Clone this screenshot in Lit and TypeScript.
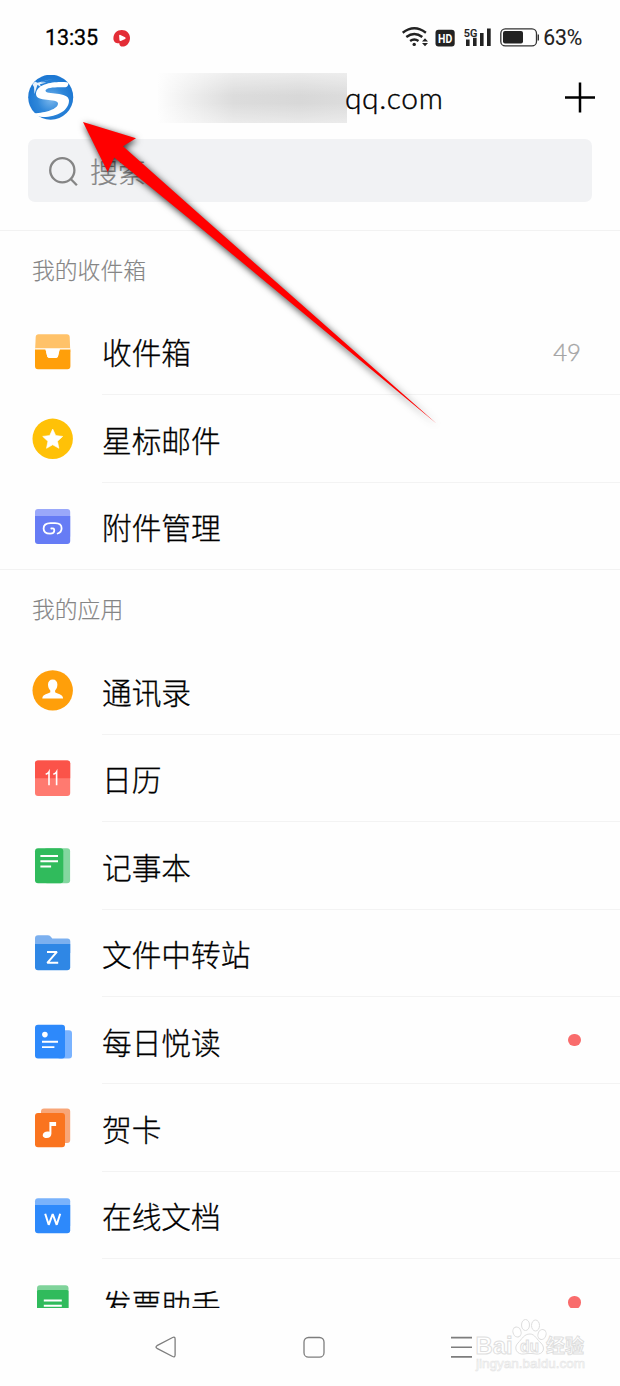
import { LitElement, html, svg, css, nothing } from "lit";
import { customElement, property } from "lit/decorators.js";

const icons: Record<string, unknown> = {
  inbox: svg`<path d="M6.500 3.300h28.400q2.600 0 2.800 2.600l.6 15H3l.7-15q.2-2.600 2.800-2.600z" fill="#ffc269"/>
    <path d="M3.200 17.300h35l.2 3H3z" fill="#fff"/>
    <path d="M3 18.600h10.500l1.700 6.600q.5 1.800 2.300 1.800h6.200q1.800 0 2.300-1.800l1.700-6.600h10.700v16.600q0 3-3 3H6q-3 0-3-3z" fill="#ff9f0a"/>
    <path d="M13.500 18h14.200l-1.700 7.200q-.5 1.800-2.300 1.800h-6.200q-1.800 0-2.300-1.800z" fill="#fff"/>`,
  star: svg`<circle cx="20.700" cy="19.800" r="20.200" fill="#ffc107"/>
    <path d="M20.700 10l3 6.500 7 .9-5.200 4.900 1.400 7-6.200-3.500-6.200 3.500 1.400-7L10.700 17.400l7-.9z" fill="#fff" stroke="#fff" stroke-width=".6" stroke-linejoin="round"/>`,
  attach: svg`<rect x="3" y="3" width="35.200" height="30" rx="3" fill="#9aa8fa"/>
    <path d="M3 10h35.200V35q0 3-3 3H6q-3 0-3-3z" fill="#667cf5"/>
    <path d="M19.300 22.500q3-.6 3 1.700c0 2.100-1.900 3.400-4.200 3.400-3.900 0-6.500-2-6.500-5.100 0-3.400 2.700-5.400 6.900-5.400h4.600c3.900 0 6.500 1.900 6.500 5.100 0 2.700-1.500 4.600-4 5.300" fill="none" stroke="#fff" stroke-width="1.800" stroke-linecap="round"/>`,
  contacts: svg`<circle cx="20.700" cy="19.400" r="20.200" fill="#ff9f0a"/>
    <path d="M20.700 8.600c3 0 4.700 2 4.700 5 0 2.500-.9 4.700-2.300 6v1.700c1.700 1.500 8 1.700 8 6.200H10.300c0-4.500 6.300-4.700 8-6.200v-1.700c-1.400-1.300-2.300-3.500-2.300-6 0-3 1.700-5 4.700-5z" fill="#fff"/>`,
  calendar: svg`<rect x="3" y="2.400" width="35.200" height="35.600" rx="3" fill="#ff7a70"/>
    <path d="M3 20.200V5.400q0-3 3-3h29.200q3 0 3 3v14.800z" fill="#fb5349"/>
    <path d="M13.700 16.200q2.300-.7 3.300-2.400V27.300M21.300 16.200q2.300-.7 3.300-2.400V27.300" fill="none" stroke="#fff" stroke-width="1.600"/>`,
  notes: svg`<rect x="12" y="2.200" width="26.100" height="35" rx="3" fill="#84d7a0"/>
    <rect x="3" y="2.200" width="28.300" height="35" rx="3" fill="#30bb5c"/>
    <path d="M8.400 10.100h17.600M8.400 15.200h17.600M8.400 20.500h10.700" stroke="#fff" stroke-width="2"/>`,
  folder: svg`<path d="M3 20V5.200q0-3 3-3h9.700q1.800 0 2.900 1.300l1.700 2h15q3 0 3 3V20z" fill="#7cb0ef"/>
    <path d="M3 11h35.200v23.300q0 3-3 3H6q-3 0-3-3z" fill="#2f87e5"/>
    <path d="M15 18.900h9.900L15.300 29.800h10.900" fill="none" stroke="#fff" stroke-width="2" stroke-linejoin="bevel"/>`,
  reading: svg`<rect x="25" y="9.200" width="15" height="28.200" rx="3" fill="#7ab3ff"/>
    <rect x="3" y="3.700" width="30" height="33.700" rx="3" fill="#2d89fb"/>
    <circle cx="12.900" cy="13.600" r="2.800" fill="#fff"/>
    <path d="M10 20.700h16M10 26.100h12.400" stroke="#fff" stroke-width="1.900"/>`,
  card: svg`<rect x="9" y=".4" width="29.200" height="34.500" rx="3" fill="#f8a678"/>
    <rect x="3" y="4.900" width="30" height="34.300" rx="3" fill="#fa741f"/>
    <path d="M17.400 14h6.700v4h-4.700v7.800c0 2.700-2.100 4.300-4.700 4.300-2.300 0-4-1.100-4-2.900 0-2.400 3.300-4.400 6.700-3.400z" fill="#fff"/>`,
  docs: svg`<rect x="3" y="3.200" width="35.200" height="30" rx="3" fill="#79b2fb"/>
    <path d="M3 9.900h35.200V35.200q0 3-3 3H6q-3 0-3-3z" fill="#2d89fb"/>
    <path d="M13.200 18.700l3.500 11.100 4-10.800 4 10.800 3.500-11.100" fill="none" stroke="#fff" stroke-width="2" stroke-linejoin="bevel"/>`,
  invoice: svg`<rect x="5" y="2.200" width="31.500" height="30" rx="3" fill="#7fd39a"/>
    <path d="M5 8.600q0-1.500 1.500-1.500h28.500q1.500 0 1.500 1.500v31H5z" fill="#30bb5c"/>
    <path d="M11.800 17.500h18M11.800 22.700h18" stroke="#fff" stroke-width="1.900"/>`,
};

interface Item { icon: string; label: string; count?: number; dot?: boolean; }

const sections: { title: string; items: Item[] }[] = [
  {
    title: "我的收件箱",
    items: [
      { icon: "inbox", label: "收件箱", count: 49 },
      { icon: "star", label: "星标邮件" },
      { icon: "attach", label: "附件管理" },
    ],
  },
  {
    title: "我的应用",
    items: [
      { icon: "contacts", label: "通讯录" },
      { icon: "calendar", label: "日历" },
      { icon: "notes", label: "记事本" },
      { icon: "folder", label: "文件中转站" },
      { icon: "reading", label: "每日悦读", dot: true },
      { icon: "card", label: "贺卡" },
      { icon: "docs", label: "在线文档" },
      { icon: "invoice", label: "发票助手", dot: true },
    ],
  },
];

@customElement("mail-row")
class MailRow extends LitElement {
  @property({ attribute: false }) item!: Item;

  static styles = css`
    :host { display: flex; height: 87.4px; box-sizing: border-box; padding-left: 32px; align-items: center; }
    .icon { width: 40px; height: 40px; overflow: visible; flex: none; }
    .body { flex: 1; margin-left: 30px; height: 100%; box-sizing: border-box; border-bottom: 1px solid #f3f3f3; display: flex; align-items: center; justify-content: space-between; padding-right: 39px; }
    :host([last]) .body { border-bottom-color: transparent; }
    .label { font-size: 29.700px; line-height: 44px; font-weight: 300; -webkit-text-stroke: 0.3px #000; color: #000; padding-top: 3px; }
    .count { font: 300 24px/30px "Lato", sans-serif; color: #a4a4a4; -webkit-text-stroke: 0.35px #a4a4a4; padding-top: 2px; }
    .dot { width: 12.500px; height: 12.500px; border-radius: 50%; background: #f96c6c; margin-right: 0.5px; }
  `;

  render() {
    const { icon, label, count, dot } = this.item;
    return html`
      <svg class="icon" viewBox="0 0 40 40">${icons[icon]}</svg>
      <div class="body">
        <span class="label">${label}</span>
        ${count ? html`<span class="count">${count}</span>` : nothing}
        ${dot ? html`<span class="dot"></span>` : nothing}
      </div>`;
  }
}

@customElement("status-bar")
class StatusBar extends LitElement {
  static styles = css`
    :host { display: flex; height: 73px; box-sizing: border-box; padding: 24px 38px 0 45px; justify-content: space-between; align-items: flex-start; font: 21.500px/28px Roboto, sans-serif; color: #222; }
    .left { display: flex; align-items: center; gap: 15px; }
    .time { letter-spacing: -0.1px; color: #000; -webkit-text-stroke: 0.3px #000; }
    .right { display: flex; align-items: center; }
    .signals { width: 138px; height: 28px; margin-right: 4px; }
    .level { font-size: 21.200px; letter-spacing: -0.2px; -webkit-text-stroke: 0.1px #222; }
    .tag { font: 700 13px "Roboto", sans-serif; }
    .net { font: 500 11.500px "Roboto", sans-serif; }
  `;

  render() {
    return html`
      <div class="left">
        <span class="time">13:35</span>
        <svg width="18" height="18" viewBox="0 0 18 18">
          <path d="M.4 9.400C.4 4.500 4 1 8.800 1c4.700 0 8.200 3.400 8.200 8 0 4.900-3.500 8.600-7.400 8.600-2 0-3.300-1.300-3.300-3.400-2.700.5-5.900-1.200-5.900-4.800z" fill="#e32d36"/>
          <path d="M7 6.700l.4 4.500 4.300-2.100z" fill="#fff" stroke="#fff" stroke-width="1.800" stroke-linejoin="round"/>
        </svg>
      </div>
      <div class="right">
        <svg class="signals" viewBox="401 24 138 28">
          <g fill="none" stroke="#222" stroke-width="2.400">
            <path d="M402.700 32.700q11.600-9 23.200 0"/><path d="M406.300 37q8-6 16 0"/><path d="M410.100 41q4.200-3 8.400 0"/>
          </g>
          <circle cx="414.200" cy="44.400" r="1.700" fill="#222"/>
          <path d="M422 41.500l3-3.200 3 3.200zM422 43h6l-3 3.200z" fill="#222"/>
          <rect x="435.500" y="29.800" width="19.200" height="16.700" rx="3" fill="#222"/>
          <text class="tag" x="438" y="42.900" textLength="14.200" lengthAdjust="spacingAndGlyphs" fill="#fff">HD</text>
          <text class="net" x="463.800" y="36.500" textLength="13.500" lengthAdjust="spacingAndGlyphs" fill="#222" stroke="#222" stroke-width=".2">5G</text>
          <path d="M466 39.500h3.600v6.500H466zM473 37.800h3.600V46H473zM480 33h3.600v13H480zM487 28.500h3.700V46H487z" fill="#222"/>
          <rect x="500.800" y="28.900" width="35.700" height="17" rx="4.500" fill="none" stroke="#333" stroke-width="1.300"/>
          <rect x="503" y="31" width="20" height="12.600" rx="2" fill="#222"/>
          <path d="M538.300 34.500v6" stroke="#333" stroke-width="1.400"/>
        </svg>
        <span class="level">63%</span>
      </div>`;
  }
}

@customElement("app-root")
class AppRoot extends LitElement {
  static styles = css`
    :host { display: flex; flex-direction: column; position: relative; width: 620px; height: 1386px; overflow: hidden; background: #fefefe; font-family: "Noto Sans CJK SC", sans-serif; }
    .header { display: flex; align-items: center; height: 50px; padding: 0 24px 0 28px; }
    .logo { width: 46px; height: 46px; }
    .mask { width: 189px; height: 50px; margin-left: 84px; background: linear-gradient(180deg, #ffffff80 0%, #ffffff00 45%, #ffffff00 60%, #ffffff70 100%), linear-gradient(90deg, #fdfdfd 0%, #f0f0f0 15%, #dcdcdc 40%, #d8d8d8 75%, #dcdcdc 100%); }
    .address { flex: 1; margin-left: -2px; font: 300 30px/34px "Lato", sans-serif; letter-spacing: 0.6px; -webkit-text-stroke: 0.4px #000; color: #000; position: relative; top: -1px; }
    .plus { width: 32px; height: 32px; }
    .search { display: flex; align-items: center; height: 63px; margin: 16px 28px 28px; border-radius: 7px; background: #f1f2f4; padding-left: 20px; color: #858585; font-size: 28px; font-weight: 300; -webkit-text-stroke: 0.2px #858585; line-height: 40px; gap: 11px; }
    .section { border-top: 1px solid #f2f2f2; }
    .section:first-child { height: 338px; }
    .title { height: 76.800px; line-height: 77px; padding-left: 32px; font-size: 22.800px; font-weight: 300; color: #858585; -webkit-text-stroke: 0.15px #858585; }
    .section + .section .title { height: 77.400px; }
    .list { flex: none; height: 1078px; overflow: hidden; }
    .nav { flex: 1; }
    .nav svg { display: block; }
    .mark { font: 700 24px "Liberation Sans", sans-serif; }
    .mark-du { font: 700 17px "Liberation Sans", sans-serif; }
    .mark-cn { font: 700 19px "Noto Sans CJK SC", sans-serif; }
    .mark-url { font: 13.500px "Liberation Sans", sans-serif; }
    .arrow { position: absolute; left: 0; top: 0; pointer-events: none; filter: drop-shadow(1px 2px 3.500px rgba(0, 0, 0, 0.8)); }
  `;

  render() {
    return html`
      <status-bar></status-bar>
      <div class="header">
        <svg class="logo" viewBox="0 0 46 46">
          <defs><radialGradient id="ball" cx=".5" cy=".55" r=".5"><stop offset="0" stop-color="#79b6ec"/><stop offset=".6" stop-color="#2f87d9"/><stop offset="1" stop-color="#1d78d3"/></radialGradient></defs>
          <circle cx="22.700" cy="22.200" r="22.500" fill="url(#ball)"/>
          <path d="M39 7.300C28 6 9 8 8 18.500 7.300 28 30 22.500 30 28.500 30 34 18 37.800 6 38.300c2 2.200 5 3.700 9 3.700C30 42 41 35 41 25.500 41 16 17 20.500 17.500 15.500 18 12 30 12 37.500 12.300c2.500-.3 4-4.300 1.500-5z" fill="#fff"/>
          <path d="M4.500 9.500L7 6.500l2.500 1.200L25 3.800 12.500 7.200l6 .3-6.500 1.700 1 3-3.500-2.400-1 3L6.500 19 6 12z" fill="#fff" opacity=".9"/>
        </svg>
        <div class="mask"></div>
        <div class="address">qq.com</div>
        <svg class="plus" viewBox="0 0 32 32"><path d="M1 15.500h30M16 .5v30" stroke="#000" stroke-width="2.500"/></svg>
      </div>
      <div class="search">
        <svg width="31" height="31" viewBox="0 0 31 31" fill="none" stroke="#858585" stroke-width="2.300"><circle cx="14.300" cy="15.200" r="12.100"/><path d="M22.700 24l6.200 6.200"/></svg>
        <span>搜索</span>
      </div>
      <div class="list">
        ${sections.map((s) => html`
          <div class="section">
            <div class="title">${s.title}</div>
            ${s.items.map((item, i) => html`<mail-row .item=${item} ?last=${i === s.items.length - 1}></mail-row>`)}
          </div>`)}
      </div>
      <div class="nav">
        <svg width="620" height="78" viewBox="0 1308 620 78" fill="none">
          <g stroke="#7d7d7d" stroke-width="1.300" stroke-linejoin="round">
            <path d="M157 1345.700l15.600-8.200q2.500-1 2.500 1.500v16q0 2.500-2.500 1.500l-15.600-8.200q-2-1.300 0-2.600z"/>
            <rect x="304" y="1337.500" width="20" height="19.700" rx="4.500"/>
            <path d="M451 1337.600h21M451 1347.300h21M451 1356.900h21" stroke-width="1.600"/>
          </g>
          <g fill="#fff" stroke="#dedede" stroke-width="1">
            <ellipse cx="517" cy="1332" rx="4" ry="5" transform="rotate(-20 517 1332)"/>
            <ellipse cx="525.500" cy="1325" rx="4" ry="5.500"/>
            <ellipse cx="535.500" cy="1325.500" rx="4" ry="5.500"/>
            <ellipse cx="542" cy="1334.500" rx="4" ry="5" transform="rotate(20 542 1334.500)"/>
            <path d="M530 1334c5 0 7 6 11 9 5 5 2 12-5 11-4-.7-8-.7-12 0-7 1-11-6-6-11 4-4 6-9 12-9z"/>
            <text class="mark" x="475.500" y="1354" textLength="37" lengthAdjust="spacingAndGlyphs">Bai</text>
            <text class="mark-du" x="520" y="1352" textLength="19" lengthAdjust="spacingAndGlyphs">du</text>
            <text class="mark-cn" x="546" y="1353" textLength="38">经验</text>
            <text class="mark-url" x="476" y="1368" textLength="109" lengthAdjust="spacingAndGlyphs" stroke="#e4e4e4" stroke-width=".6">jingyan.baidu.com</text>
          </g>
        </svg>
      </div>
      <svg class="arrow" width="620" height="440" viewBox="0 0 620 440"><path d="M83 122L136 138.300 123 146.300 200 214.800 437 424 200 227.500 114.200 157.500 107.700 172z" fill="#f00"/></svg>`;
  }
}
